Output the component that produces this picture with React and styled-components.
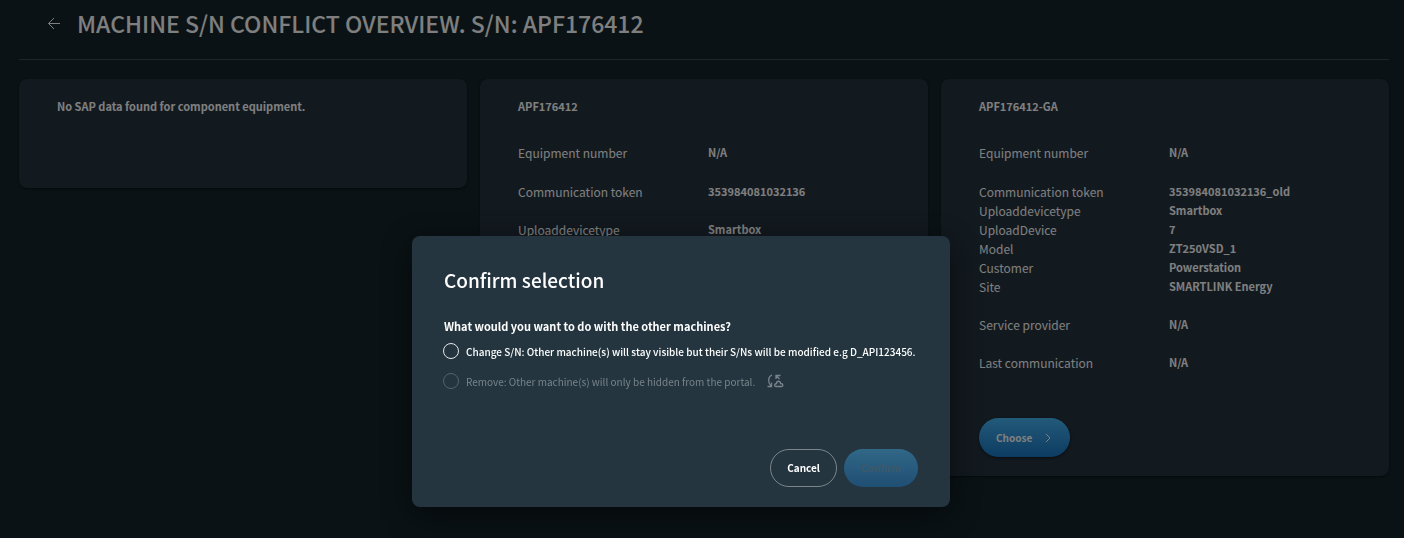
import React, { useState } from 'react'
import styled, { createGlobalStyle } from 'styled-components'

const GlobalStyle = createGlobalStyle`
  * {
    box-sizing: border-box;
  }
  body {
    margin: 0;
    min-height: 100vh;
    background: #14242a;
    color: #fff;
    font-family: 'Noto Sans CJK SC', 'Noto Sans', sans-serif;
    font-size: 12px;
    line-height: 19px;
  }
  h1, h2, h3, p, dl, dd, fieldset {
    margin: 0;
    padding: 0;
    border: 0;
  }
  button {
    font-family: inherit;
    cursor: pointer;
  }
`

const Page = styled.main`
  padding: 0 15px 20px 19px;
`

const Header = styled.header`
  display: flex;
  align-items: center;
  gap: 16px;
  height: 60px;
  padding: 0 0 14px 28px;
  border-bottom: 1px solid #404a50;
`

const BackButton = styled.button`
  display: flex;
  padding: 0;
  border: 0;
  background: none;
  color: #fff;
`

const Heading = styled.h1`
  font-size: 23px;
  font-weight: 500;
  line-height: 32px;
  text-transform: uppercase;
`

const Cards = styled.section`
  display: grid;
  grid-template-columns: repeat(3, 1fr);
  align-items: start;
  gap: 13px;
  margin-top: 19px;
`

const Card = styled.article`
  min-height: 109px;
  padding: 18px 30px 19px 38px;
  border-radius: 8px;
  background: #24323e;
  box-shadow: 0 1px 2px rgba(0, 0, 0, 0.5);
`

const CardTitle = styled.h3`
  font-size: 11px;
  font-weight: 700;
  line-height: 19px;
`

const Details = styled.div`
  display: flex;
  flex-direction: column;
  gap: 19px;
  margin-top: 27px;
`

const Group = styled.dl`
  display: grid;
  grid-template-columns: 1fr 1fr;
  &:first-child {
    margin-bottom: 1px;
  }
`

const Label = styled.dt`
  font-weight: 400;
`

const Value = styled.dd`
  font-size: 11px;
  font-weight: 700;
`

const Pill = styled.button`
  display: inline-flex;
  align-items: center;
  gap: 11px;
  height: 38px;
  padding: 0 17px;
  border: 0;
  border-radius: 20px;
  color: #fff;
  font-size: 10px;
  font-weight: 700;
  line-height: 16px;
`

const PrimaryButton = styled(Pill)`
  background: linear-gradient(#46b4f4, #1a78c4);
  box-shadow: 0 1px 3px rgba(0, 0, 0, 0.5);
  &:disabled {
    color: #6490ac;
    box-shadow: none;
    opacity: 0.4;
    cursor: default;
  }
`

const ChooseButton = styled(PrimaryButton)`
  height: 39px;
  margin-top: 46px;
`

const OutlineButton = styled(Pill)`
  border: 1px solid #7c868b;
  padding: 0 16px;
  background: transparent;
`

const Overlay = styled.div`
  position: fixed;
  inset: 0;
  display: flex;
  justify-content: center;
  align-items: flex-start;
  padding: 236px 42px 0 0;
  background: rgba(0, 0, 0, 0.5);
`

const Dialog = styled.section`
  width: 538px;
  padding: 29px 32px 20px;
  border-radius: 8px;
  background: #24353f;
  box-shadow: 0 8px 32px rgba(0, 0, 0, 0.5);
`

const DialogTitle = styled.h2`
  font-size: 19px;
  font-weight: 500;
  line-height: 30px;
`

const Options = styled.fieldset`
  min-width: 0;
  margin-top: 22px;
`

const Question = styled.legend`
  padding: 0;
  font-size: 11px;
  font-weight: 700;
`

const Option = styled.label`
  display: flex;
  align-items: center;
  gap: 7px;
  height: 30px;
  margin-left: -1px;
  font-size: 10px;
  font-weight: ${(props) => (props.$disabled ? 400 : 500)};
  white-space: nowrap;
  color: ${(props) => (props.$disabled ? '#78838a' : '#fff')};
`

const Radio = styled.input`
  appearance: none;
  flex: none;
  width: 16px;
  height: 16px;
  margin: 0;
  border: 1px solid #e4e7e8;
  border-radius: 50%;
  &:checked {
    box-shadow: inset 0 0 0 3px #24353f;
    background: #fff;
  }
  &:disabled {
    border-color: #56626a;
  }
`

const SyncIcon = styled.svg`
  margin-left: 5px;
`

const Actions = styled.footer`
  display: flex;
  justify-content: flex-end;
  gap: 7px;
  margin-top: 53px;
`

const machines = [
  {
    name: 'APF176412',
    groups: [
      [['Equipment number', 'N/A']],
      [['Communication token', '353984081032136']],
      [['Uploaddevicetype', 'Smartbox']],
    ],
  },
  {
    name: 'APF176412-GA',
    selectable: true,
    groups: [
      [['Equipment number', 'N/A']],
      [
        ['Communication token', '353984081032136_old'],
        ['Uploaddevicetype', 'Smartbox'],
        ['UploadDevice', '7'],
        ['Model', 'ZT250VSD_1'],
        ['Customer', 'Powerstation'],
        ['Site', 'SMARTLINK Energy'],
      ],
      [['Service provider', 'N/A']],
      [['Last communication', 'N/A']],
    ],
  },
]

const MachineCard = ({ machine }) => (
  <Card>
    <CardTitle>{machine.name}</CardTitle>
    <Details>
      {machine.groups.map((rows) => (
        <Group key={rows[0][0]}>
          {rows.map(([label, value]) => (
            <React.Fragment key={label}>
              <Label>{label}</Label>
              <Value>{value}</Value>
            </React.Fragment>
          ))}
        </Group>
      ))}
    </Details>
    {machine.selectable && (
      <ChooseButton type='button'>
        Choose
        <svg width='10' height='10' viewBox='0 0 10 10' fill='none' stroke='currentColor'>
          <path d='M3 1l4 4-4 4' />
        </svg>
      </ChooseButton>
    )}
  </Card>
)

const App = () => {
  const [action, setAction] = useState('')

  return (
    <>
      <GlobalStyle />
      <Page>
        <Header>
          <BackButton type='button' aria-label='Back'>
            <svg width='14' height='14' viewBox='0 0 14 14' fill='none' stroke='currentColor'>
              <path d='M13 7.5H1.5M7 2L1.5 7.5L7 13' />
            </svg>
          </BackButton>
          <Heading>Machine S/N conflict overview. S/N: APF176412</Heading>
        </Header>
        <Cards>
          <Card>
            <CardTitle>No SAP data found for component equipment.</CardTitle>
          </Card>
          {machines.map((machine) => (
            <MachineCard key={machine.name} machine={machine} />
          ))}
        </Cards>
      </Page>

      <Overlay>
        <Dialog role='dialog' aria-modal='true' aria-labelledby='dialog-title'>
          <DialogTitle id='dialog-title'>Confirm selection</DialogTitle>
          <Options>
            <Question>What would you want to do with the other machines?</Question>
            <Option>
              <Radio
                type='radio'
                name='action'
                checked={action === 'change'}
                onChange={() => setAction('change')}
              />
              Change S/N: Other machine(s) will stay visible but their S/Ns will be modified e.g D_API123456.
            </Option>
            <Option $disabled>
              <Radio type='radio' name='action' disabled />
              Remove: Other machine(s) will only be hidden from the portal.
              <SyncIcon width='17' height='14' viewBox='0 0 17 14' fill='none' stroke='currentColor' strokeWidth='1.3'>
                <path d='M5 1C1 2.5 .5 8.5 4 12M.5 12.5H4.5V8.5' />
                <path d='M9 5V1.5H13.5M9 1.5L12.5 5' />
                <path d='M9 12.5C7 12.5 7 10 9.5 9.5C9.5 6.5 13.5 6.5 13.5 9.5C16.5 9.5 16.5 12.5 14.5 12.5Z' />
              </SyncIcon>
            </Option>
          </Options>
          <Actions>
            <OutlineButton type='button'>Cancel</OutlineButton>
            <PrimaryButton type='button' disabled={!action}>
              Confirm
            </PrimaryButton>
          </Actions>
        </Dialog>
      </Overlay>
    </>
  )
}

export default App
